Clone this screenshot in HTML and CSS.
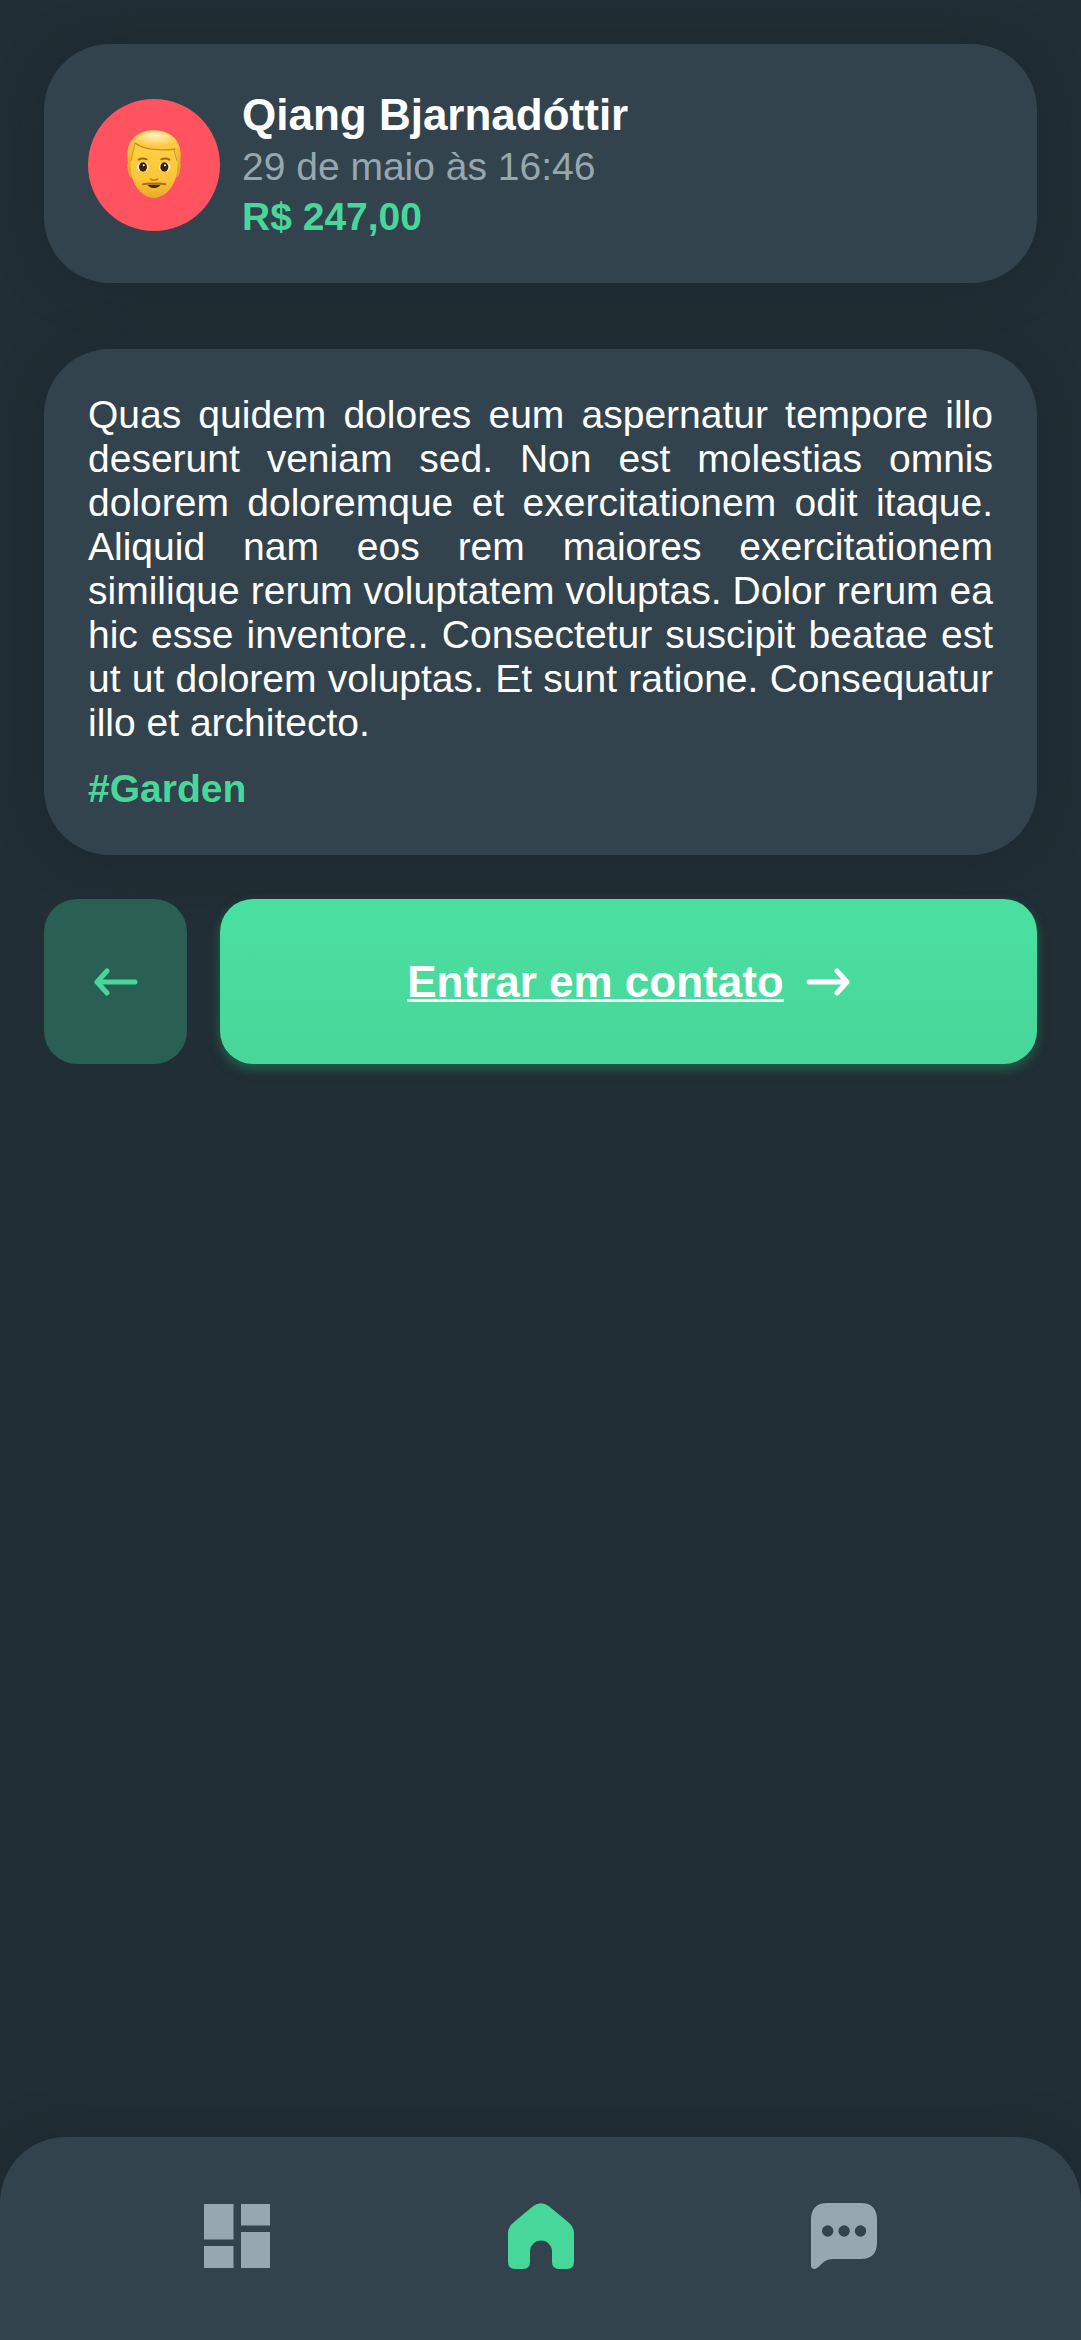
FILE: index.html
```html
<!DOCTYPE html>
<html lang="pt-BR">
<head>
  <meta charset="utf-8">
  <meta name="viewport" content="width=device-width, initial-scale=1">
  <title>Qiang Bjarnadóttir</title>
  <link rel="stylesheet" href="styles.css">
</head>
<body>
  <main class="content">
    <header class="card profile">
      <svg class="avatar" viewBox="-36 -33 396 396" role="img" aria-label="Homem loiro">
        <defs>
          <linearGradient id="skin" x1="0" y1="0" x2="0" y2="1">
            <stop offset="0" stop-color="#ffd043"/>
            <stop offset=".65" stop-color="#fbc637"/>
            <stop offset="1" stop-color="#e9a928"/>
          </linearGradient>
          <linearGradient id="side" x1="0" y1="0" x2="0" y2="1">
            <stop offset="0" stop-color="#ffd258"/>
            <stop offset=".5" stop-color="#f8bd36"/>
            <stop offset="1" stop-color="#dc9c28"/>
          </linearGradient>
          <radialGradient id="hair" cx=".48" cy=".22" r=".6">
            <stop offset="0" stop-color="#fff0c0"/>
            <stop offset=".45" stop-color="#ffe08a"/>
            <stop offset="1" stop-color="#fcc842"/>
          </radialGradient>
        </defs>
        <path fill="#e7a92c" d="M88 158c-7-1-7 6-5 18s5 26 12 27zM236 158c7-1 7 6 5 18s-5 26-12 27z"/>
        <path fill="url(#side)" d="M160 61c-46 0-78 30-78 72 0 24 5 46 10 60h141c6-16 9-36 9-58 0-44-30-74-82-74z"/>
        <path fill="url(#skin)" d="M107 100c-8 24-16 46-15 80 3 42 34 84 70 84s67-42 70-84c2-22 0-40-8-62z"/>
        <path fill="none" stroke="#d0922a" stroke-width="3" d="M105 100c-3 20-10 32-11 52M222 118c1 14 7 20 8 34"/>
        <path fill="url(#hair)" d="M104 97c8-20 30-33 58-33 38 0 64 20 73 50-26 6-98 9-131-17z"/>
        <path fill="none" stroke="#c78a22" stroke-width="4" d="M104 98c30 24 88 24 122 19"/>
        <g fill="none" stroke="#a4661a" stroke-width="6" stroke-linecap="round">
          <path d="M116 149q10-7 24-1M184 148q14-6 24 1"/>
        </g>
        <g fill="#f8e4b8">
          <ellipse cx="128" cy="171" rx="18" ry="15"/>
          <ellipse cx="194" cy="171" rx="18" ry="15"/>
        </g>
        <g fill="#38210f">
          <ellipse cx="129" cy="171" rx="12" ry="14"/>
          <ellipse cx="193" cy="171" rx="12" ry="14"/>
        </g>
        <g fill="#fff">
          <circle cx="131" cy="166" r="3"/>
          <circle cx="195" cy="166" r="3"/>
        </g>
        <path fill="none" stroke="#cc8423" stroke-width="5" stroke-linecap="round" d="M151 207q11 7 22 0"/>
        <path fill="#46270f" d="M142 224h40q-8 10-20 10t-20-10z"/>
        <path fill="none" stroke="#ad6b1c" stroke-width="6" stroke-linecap="round" d="M129 223q17-3 33-2 16-1 34 2"/>
      </svg>
      <div class="profile-text">
        <h1 class="name">Qiang Bjarnadóttir</h1>
        <time class="date" datetime="05-29T16:46">29 de maio às 16:46</time>
        <strong class="accent">R$ 247,00</strong>
      </div>
    </header>

    <article class="card post">
      <p class="description">Quas quidem dolores eum aspernatur tempore illo deserunt veniam sed. Non est molestias omnis dolorem doloremque et exercitationem odit itaque. Aliquid nam eos rem maiores exercitationem similique rerum voluptatem voluptas. Dolor rerum ea hic esse inventore.. Consectetur suscipit beatae est ut ut dolorem voluptas. Et sunt ratione. Consequatur illo et architecto.</p>
      <strong class="accent">#Garden</strong>
    </article>

    <div class="actions">
      <button class="back" type="button" aria-label="Voltar">
        <svg class="arrow" viewBox="0 0 44 28" aria-hidden="true"><path d="M41 14H3M13 3L3 14l10 11"/></svg>
      </button>
      <a class="contact" href="#contato">
        <span class="contact-label">Entrar em contato</span>
        <svg class="arrow" viewBox="0 0 44 28" aria-hidden="true"><path d="M3 14h38M31 3l10 11-10 11"/></svg>
      </a>
    </div>
  </main>

  <nav class="tabs" aria-label="Principal">
    <a class="tab" href="#painel" aria-label="Painel">
      <svg class="tab-icon" viewBox="0 0 66 66" aria-hidden="true"><path d="M0 1h29.500v35.500H0zM0 43h29.500v22H0zM37 1h29v21.500H37zM37 29h29v36H37z"/></svg>
    </a>
    <a class="tab tab-active" href="#inicio" aria-label="Início" aria-current="page">
      <svg class="tab-icon" viewBox="0 0 66 66" aria-hidden="true"><path d="M25 3.200Q33-2.800 41 3.200L60 19q6 5 6 11v29q0 7-7 7h-8q-7 0-7-7V48.500a11 11 0 0 0-22 0V59q0 7-7 7H7q-7 0-7-7V30q0-6 6-11z"/></svg>
    </a>
    <a class="tab" href="#mensagens" aria-label="Mensagens">
      <svg class="tab-icon" viewBox="0 0 66 66" aria-hidden="true"><path fill-rule="evenodd" d="M16.500 0h33Q66 0 66 16.500v23Q66 56 49.500 56H22c-6 0-10 3-14 7.500C4 67.500 0 66 0 62.500v-46Q0 0 16.500 0zM11 28a5.700 5.700 0 1 0 11.400 0 5.700 5.700 0 1 0-11.400 0zM27.400 28a5.700 5.700 0 1 0 11.400 0 5.700 5.700 0 1 0-11.400 0zM43.800 28a5.700 5.700 0 1 0 11.400 0 5.700 5.700 0 1 0-11.400 0z"/></svg>
    </a>
  </nav>
</body>
</html>
```
FILE: styles.css
```css
:root {
  --background: #212e35;
  --surface: #32434d;
  --accent: #47d79b;
  --muted: #96a7af;
  --shadow: 0 3px 44px rgba(24, 37, 44, 0.6);
}

* {
  box-sizing: border-box;
}

body {
  display: flex;
  flex-direction: column;
  min-height: 100vh;
  margin: 0;
  background: var(--background);
  color: #fff;
  font-family: "Liberation Sans", Arial, sans-serif;
  font-size: 39px;
  line-height: 44px;
}

.content {
  display: flex;
  flex: 1;
  flex-direction: column;
  padding: 44px;
}

.card {
  padding: 44px;
  border-radius: 66px;
  background: var(--surface);
  box-shadow: var(--shadow);
}

.profile {
  display: flex;
  align-items: center;
  gap: 22px;
  margin-bottom: 66px;
  padding-top: 46px;
}

.avatar {
  flex: none;
  width: 132px;
  height: 132px;
  border-radius: 50%;
  background: #ff5460;
}

.profile-text {
  display: flex;
  flex-direction: column;
  gap: 6px;
}

.name {
  margin: 0;
  font-size: 44px;
  line-height: 49px;
}

.date {
  color: var(--muted);
}

.accent {
  color: var(--accent);
}

.post {
  display: flex;
  flex-direction: column;
  gap: 22px;
  margin-bottom: 44px;
}

.description {
  margin: 0;
  text-align: justify;
}

.actions {
  display: flex;
  gap: 33px;
}

.back,
.contact {
  display: flex;
  align-items: center;
  justify-content: center;
  height: 165px;
  border: 0;
  border-radius: 33px;
}

.back {
  flex: none;
  width: 143px;
  padding: 0;
  background: #2a5f54;
  color: var(--accent);
}

.contact {
  flex: 1;
  gap: 22px;
  background: linear-gradient(#4ae0a1, #48d699);
  box-shadow: 0 5px 11px rgba(34, 150, 100, 0.5);
  color: #fff;
  font-size: 44px;
  font-weight: bold;
  text-decoration: none;
}

.contact-label {
  text-decoration: underline 3px;
  text-decoration-skip-ink: none;
  text-underline-offset: 2px;
}

.arrow {
  width: 44px;
  height: 28px;
  fill: none;
  stroke: currentColor;
  stroke-width: 5;
  stroke-linecap: round;
  stroke-linejoin: round;
}

.tabs {
  display: flex;
  justify-content: space-between;
  padding: 66px 204px 71px;
  border-radius: 66px 66px 0 0;
  background: var(--surface);
  box-shadow: var(--shadow);
}

.tab {
  color: var(--muted);
}

.tab-active {
  color: var(--accent);
}

.tab-icon {
  display: block;
  width: 66px;
  height: 66px;
  fill: currentColor;
}
```
